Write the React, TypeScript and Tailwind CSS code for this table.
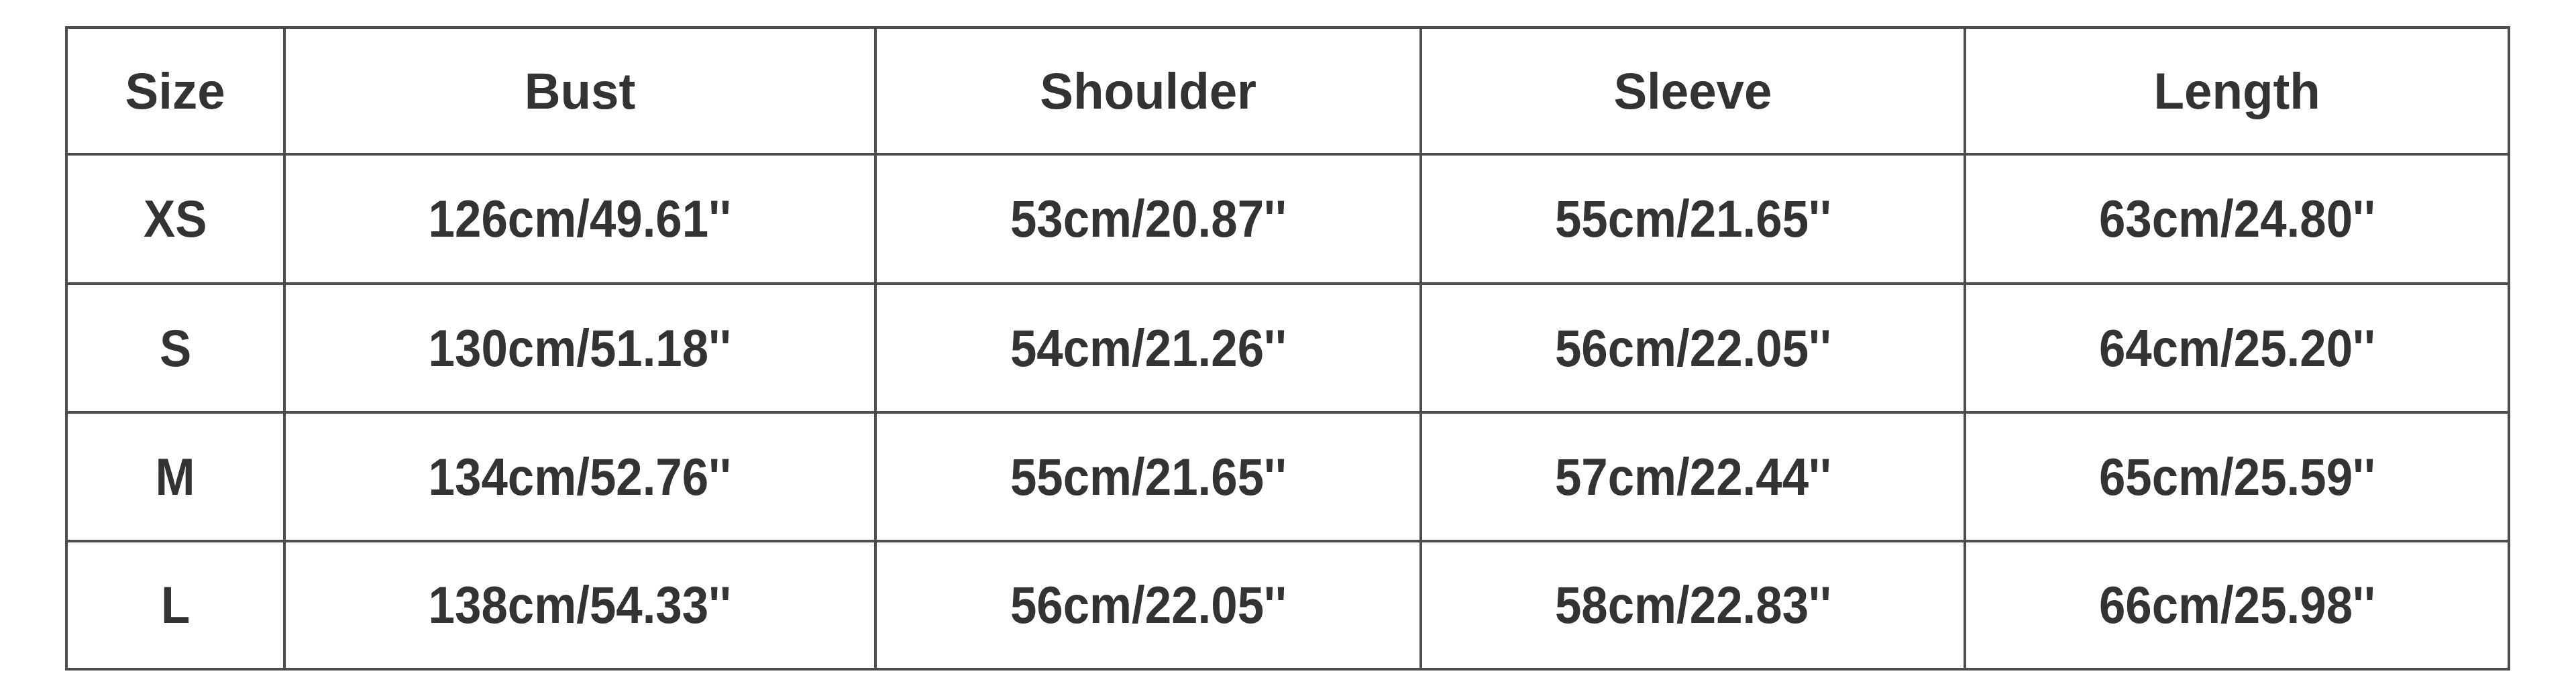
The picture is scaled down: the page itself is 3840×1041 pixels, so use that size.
import React from "react";

const headers = ["Size", "Bust", "Shoulder", "Sleeve", "Length"];
const rows: string[][] = [
  ["XS", "126cm/49.61''", "53cm/20.87''", "55cm/21.65''", "63cm/24.80''"],
  ["S", "130cm/51.18''", "54cm/21.26''", "56cm/22.05''", "64cm/25.20''"],
  ["M", "134cm/52.76''", "55cm/21.65''", "57cm/22.44''", "65cm/25.59''"],
  ["L", "138cm/54.33''", "56cm/22.05''", "58cm/22.83''", "66cm/25.98''"],
];

function Cell({ text, header }: { text: string; header?: boolean }) {
  return (
    <div className="bg-white flex items-center justify-center">
      <span
        className={
          header
            ? "inline-block scale-x-[0.98] text-[76px] leading-none font-bold text-[#333333] whitespace-nowrap"
            : "inline-block scale-x-[0.92] text-[77px] leading-none font-bold text-[#333333] whitespace-nowrap"
        }
      >
        {text}
      </span>
    </div>
  );
}

export default function App() {
  return (
    <div
      className="w-[3840px] h-[1041px] bg-white pt-[39px] pl-[97px]"
      style={{ fontFamily: '"Liberation Sans", Arial, sans-serif' }}
    >
      <div className="w-[3645px] grid grid-cols-[321px_877px_809px_807px_807px] grid-rows-[185px_189px_188px_188px_187px] gap-[4px] p-[4px] bg-[#4d4d4d]">
        {headers.map((h) => (
          <Cell key={h} text={h} header />
        ))}
        {rows.map((r, i) =>
          r.map((c, j) => <Cell key={`${i}-${j}`} text={c} />)
        )}
      </div>
    </div>
  );
}
